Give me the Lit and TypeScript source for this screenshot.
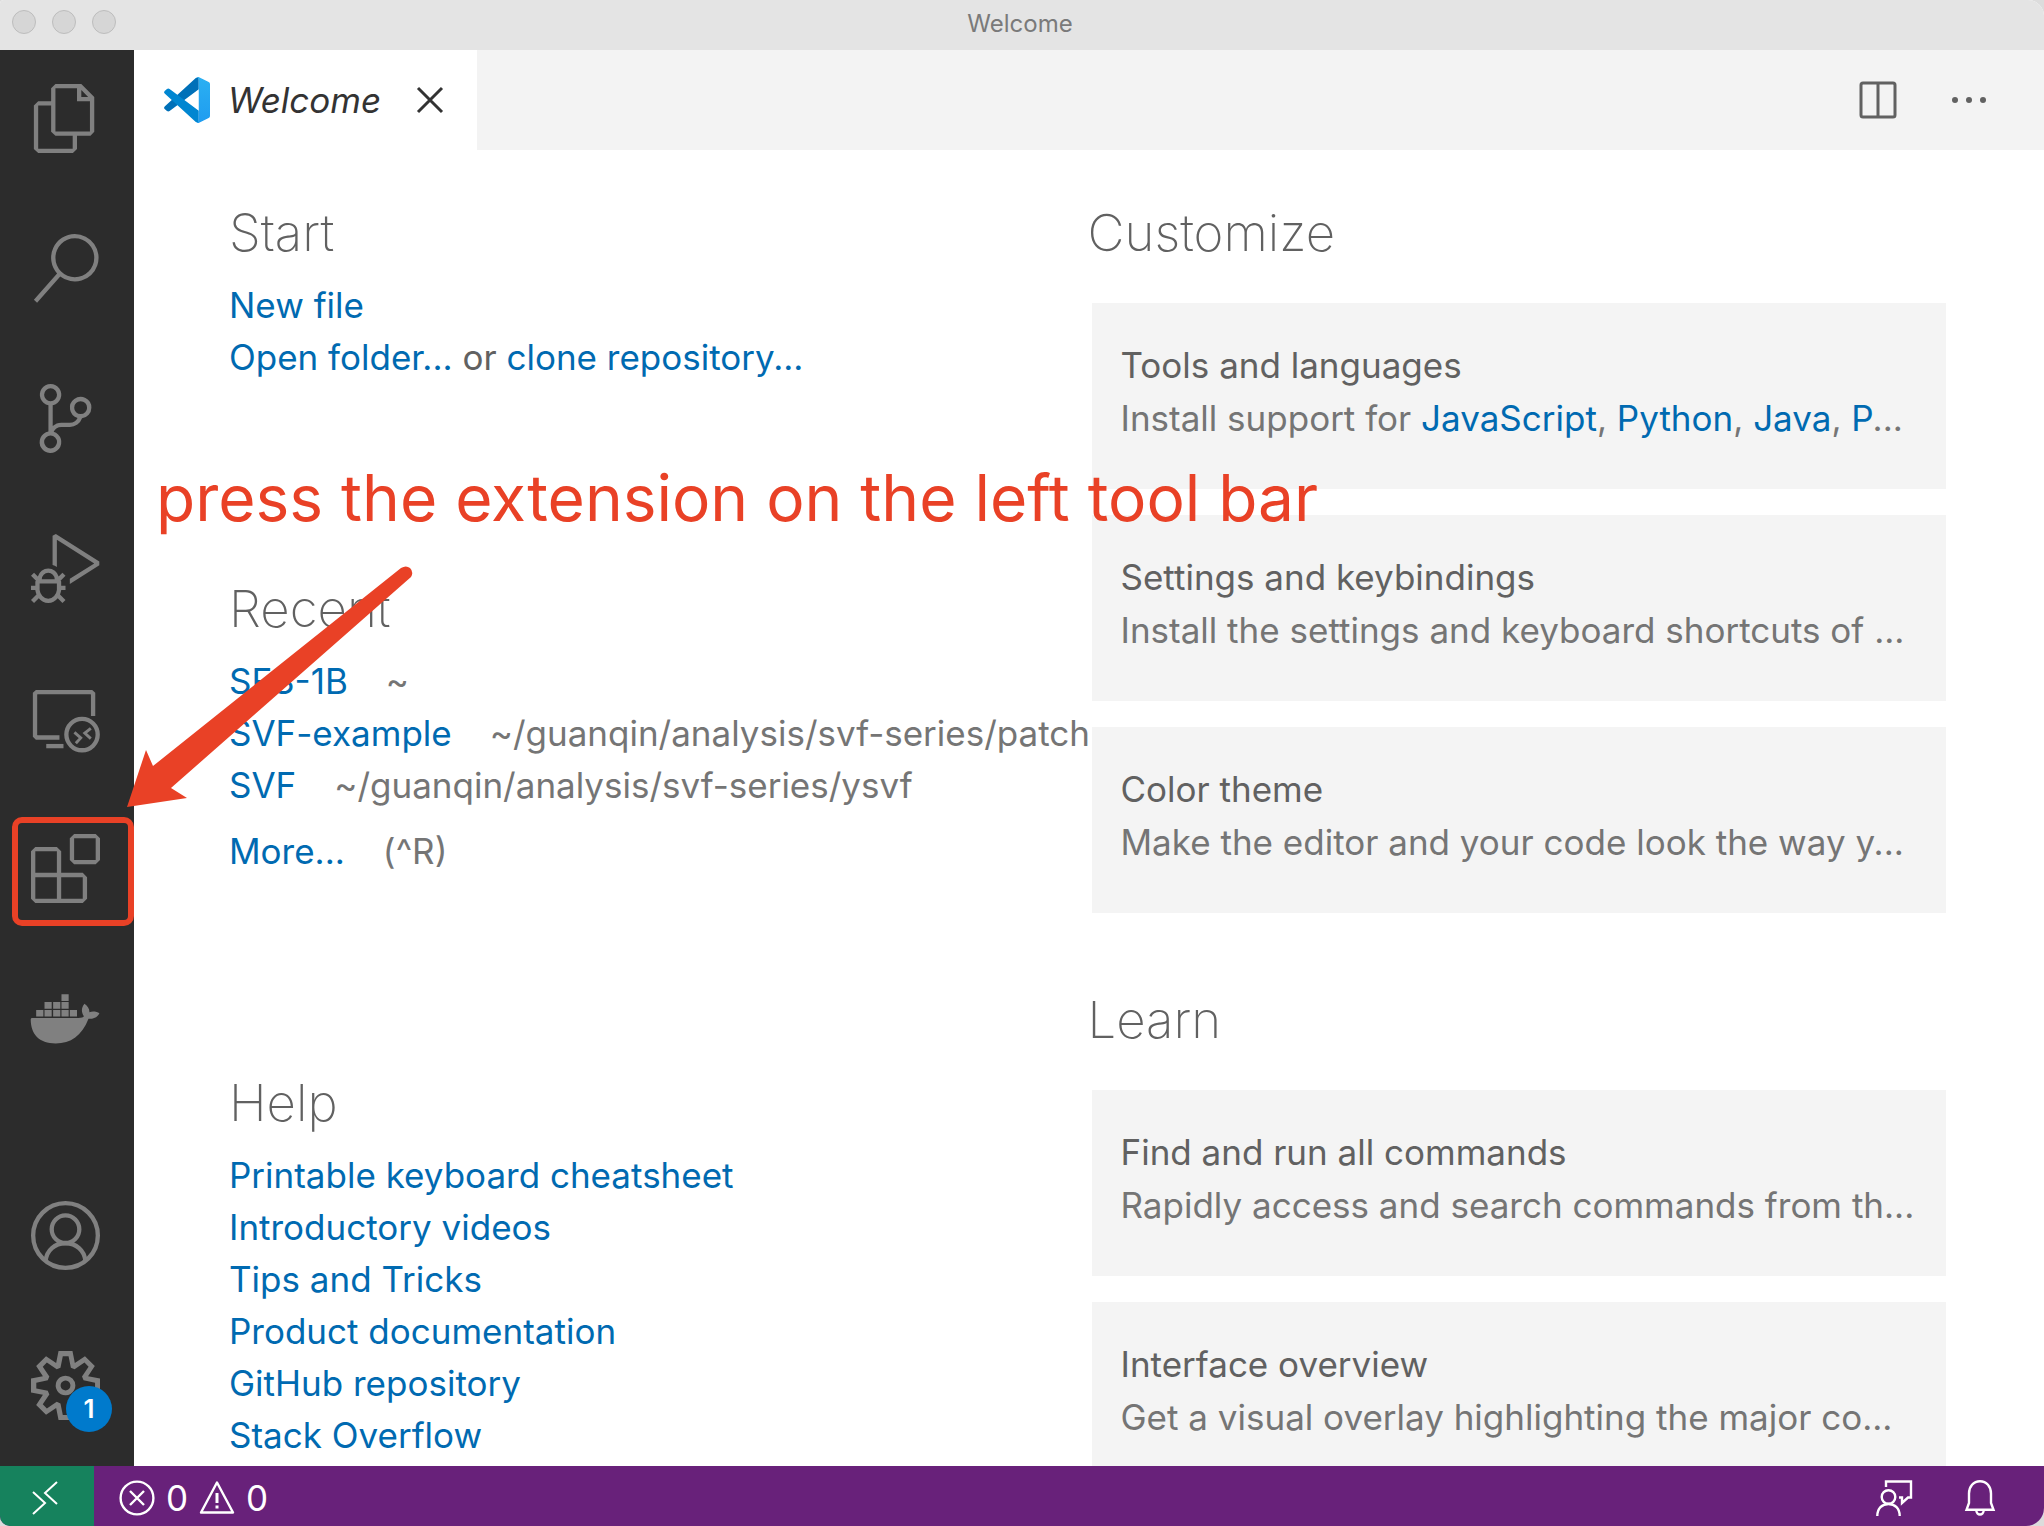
import { LitElement, html, css, svg } from "lit";
import { customElement } from "lit/decorators.js";

const filled = (d: string) => svg`<path fill="currentColor" fill-rule="evenodd" d=${d} />`;

const activityIcons = {
  explorer: filled(
    "M17.5 0h-9L7 1.5V6H2.5L1 7.5v15.07L2.5 24h12.07L16 22.57V18h4.7l1.3-1.43V4.5L17.5 0zm0 2.12l2.38 2.38H17.5V2.12zm-3 20.38h-12v-15H7v9.07L8.5 18h6v4.5zm6-6h-12v-15H16V6h4.5v10.5z"
  ),
  search: filled(
    "M15.25 0a8.25 8.25 0 0 0-6.18 13.72L1 22.88l1.12 1 8.05-9.12A8.251 8.251 0 1 0 15.25.01V0zm0 15a6.75 6.75 0 1 1 0-13.5 6.75 6.75 0 0 1 0 13.5z"
  ),
  scm: filled(
    "M21.007 8.222A3.738 3.738 0 0 0 15.045 5.2a3.737 3.737 0 0 0 1.156 6.583 2.988 2.988 0 0 1-2.668 1.67h-2.99a4.456 4.456 0 0 0-2.989 1.165V7.4a3.737 3.737 0 1 0-1.494 0v9.117a3.776 3.776 0 1 0 1.816.099 2.99 2.99 0 0 1 2.668-1.667h2.99a4.484 4.484 0 0 0 4.223-3.039 3.736 3.736 0 0 0 3.25-3.687zM4.565 3.738a2.242 2.242 0 1 1 4.484 0 2.242 2.242 0 0 1-4.484 0zm4.484 16.441a2.242 2.242 0 1 1-4.484 0 2.242 2.242 0 0 1 4.484 0zm8.221-9.715a2.242 2.242 0 1 1 0-4.485 2.242 2.242 0 0 1 0 4.485z"
  ),
  debug: filled(
    "M10.94 13.5l-1.32 1.32a3.73 3.73 0 0 0-7.24 0L1.06 13.5 0 14.56l1.72 1.72-.22.22V18H0v1.5h1.5v.08c.077.489.214.966.41 1.42L0 22.94 1.06 24l1.65-1.65A4.308 4.308 0 0 0 6 24a4.31 4.31 0 0 0 3.29-1.65L10.94 24 12 22.94 10.09 21c.198-.464.336-.951.41-1.45v-.1H12V18h-1.5v-1.5l-.22-.22L12 14.56l-1.06-1.06zM6 13.5a2.25 2.25 0 0 1 2.25 2.25h-4.5A2.25 2.25 0 0 1 6 13.5zm3 6a3.33 3.33 0 0 1-3 3 3.33 3.33 0 0 1-3-3v-2.25h6v2.25zm14.76-9.9v1.26L13.5 17.37V15.6l8.5-5.37L9 2v9.46a5.07 5.07 0 0 0-1.5-.72V.63L8.64 0l15.12 9.6z"
  ),
  remote: svg`
    <g fill="none" stroke="currentColor" stroke-width="1.5">
      <path d="M9.9 18.6H2L1.4 18V3.4L2 2.85H21L21.6 3.4V11.1" />
      <path d="M5.3 21.6H11.3" />
      <circle cx="17.75" cy="17.6" r="5.45" />
      <path stroke-width="1" d="M15.1 16.8L17.3 18.75L15.6 20.6M20.8 15.4L18.7 17.1L20.8 19" />
    </g>`,
  extensions: filled(
    "M13.5 1.5L15 0h7.5L24 1.5V9l-1.5 1.5H15L13.5 9V1.5zm1.5 0V9h7.5V1.5H15zM0 15V6l1.5-1.5H9L10.5 6v7.5H18l1.5 1.5v7.5L18 24H1.5L0 22.5V15zm9-1.5V6H1.5v7.5H9zM9 15H1.5v7.5H9V15zm1.5 7.5H18V15h-7.5v7.5z"
  ),
  docker: filled(
    "M10.6 3.6h2.5v2.3h-2.5zM4.7 6.3h2.5v2.3H4.7zM7.7 6.3h2.5v2.3H7.7zM10.6 6.3h2.5v2.3h-2.5zM1.8 9h2.5v2.3H1.8zM4.7 9h2.5v2.3H4.7zM7.7 9h2.5v2.3H7.7zM10.6 9h2.5v2.3h-2.5zM13.5 9h2.5v2.3h-2.5zM-.1 12.3Q-.1 11.8.4 11.8H16.5C17.6 11.8 18.2 11.6 18.4 11.2C17.4 9.8 17.5 8.2 18.6 6.9C19.8 7.8 20.4 8.8 20.3 9.8C21.5 9.4 22.9 9.6 23.8 10.2C23.2 11.6 21.8 12.2 20 12.1C17.7 18 13.8 20.7 8.6 20.7C2.8 20.7-.1 17.5-.1 12.3Z"
  ),
  account: svg`
    <g fill="none" stroke="currentColor" stroke-width="1.5">
      <circle cx="12" cy="12" r="11.25" />
      <circle cx="12" cy="9.8" r="4.8" />
      <path d="M5.1 20.7C5.5 17.2 8.2 14.7 12 14.7S18.5 17.2 18.9 20.7" />
    </g>`,
  gear: filled(
    "M19.85 8.75l4.15.83v4.84l-4.15.83 2.35 3.52-3.43 3.43-3.52-2.35-.83 4.15H9.58l-.83-4.15-3.52 2.35-3.43-3.43 2.35-3.52L0 14.42V9.58l4.15-.83L1.8 5.23 5.23 1.8l3.52 2.35L9.58 0h4.84l.83 4.15 3.52-2.35 3.43 3.43-2.35 3.52zm-1.57 5.07l4-.81v-2l-4-.81-.54-1.3 2.29-3.43-1.43-1.43-3.43 2.29-1.3-.54-.81-4h-2l-.81 4-1.3.54-3.43-2.29-1.43 1.43L6.38 8.9l-.54 1.3-4 .81v2l4 .81.54 1.3-2.29 3.43 1.43 1.43 3.43-2.29 1.3.54.81 4h2l.81-4 1.3-.54 3.43 2.29 1.43-1.43-2.29-3.43.54-1.3zm-8.186-4.672A3.43 3.43 0 0 1 12 8.57 3.44 3.44 0 0 1 15.43 12a3.43 3.43 0 1 1-5.336-2.852zm.956 4.274c.281.188.612.288.95.288A1.7 1.7 0 0 0 13.71 12a1.71 1.71 0 1 0-2.66 1.422z"
  ),
};

type IconName = keyof typeof activityIcons;

const topViews: { icon: IconName; label: string }[] = [
  { icon: "explorer", label: "Explorer" },
  { icon: "search", label: "Search" },
  { icon: "scm", label: "Source Control" },
  { icon: "debug", label: "Run" },
  { icon: "remote", label: "Remote Explorer" },
  { icon: "extensions", label: "Extensions" },
  { icon: "docker", label: "Docker" },
];

const recent = [
  { name: "SFS-1B", path: "~" },
  { name: "SVF-example", path: "~/guanqin/analysis/svf-series/patch" },
  { name: "SVF", path: "~/guanqin/analysis/svf-series/ysvf" },
];

const helpLinks = [
  "Printable keyboard cheatsheet",
  "Introductory videos",
  "Tips and Tricks",
  "Product documentation",
  "GitHub repository",
  "Stack Overflow",
];

const link = (text: string) => html`<a href="#">${text}</a>`;

@customElement("app-root")
export class AppRoot extends LitElement {
  static styles = css`
    :host {
      display: block;
      font-family: Inter, "Liberation Sans", sans-serif;
      font-size: 35px;
      line-height: 52px;
      color: #616161;
      background: #dcdcdc;
    }
    * {
      box-sizing: border-box;
    }
    button {
      border: 0;
      padding: 0;
      background: none;
      font: inherit;
      color: inherit;
      display: flex;
      align-items: center;
      justify-content: center;
    }
    a {
      color: #006ab1;
      text-decoration: none;
    }
    svg {
      display: block;
      flex: none;
      overflow: visible;
    }
    h1,
    h2,
    h3,
    p,
    ul {
      margin: 0;
      padding: 0;
      font-weight: 400;
      font-size: inherit;
      list-style: none;
    }
    .window {
      position: relative;
      height: 100vh;
      display: flex;
      flex-direction: column;
      overflow: hidden;
      background: #fff;
      border-radius: 4px 16px 18px 10px;
    }
    .titlebar {
      flex: none;
      height: 50px;
      display: grid;
      grid-template-columns: 1fr auto 1fr;
      align-items: center;
      padding: 0 16px 0 12px;
      background: #e4e4e4;
    }
    .titlebar h1 {
      font-size: 24px;
      line-height: 46px;
      padding-bottom: 2px;
      color: #7a7a7a;
    }
    .lights {
      display: flex;
      gap: 16px;
      padding-bottom: 6px;
    }
    .light {
      width: 24px;
      height: 24px;
      border-radius: 50%;
      background: #d6d6d6;
      border: 1px solid #bdbdbd;
    }
    .body {
      flex: 1;
      min-height: 0;
      display: flex;
    }
    .activity {
      flex: none;
      width: 134px;
      padding-right: 4px;
      display: flex;
      flex-direction: column;
      justify-content: space-between;
      background: #2c2c2c;
      color: #808080;
    }
    .group {
      display: flex;
      flex-direction: column;
      gap: 14px;
    }
    .group.bottom {
      padding-bottom: 13px;
    }
    .activity button {
      position: relative;
      width: 100%;
      height: 136px;
    }
    .activity svg {
      width: 69px;
      height: 69px;
    }
    .badge {
      position: absolute;
      left: 66px;
      top: 69px;
      width: 46px;
      height: 46px;
      border-radius: 50%;
      background: #007acc;
      color: #fff;
      font-size: 26px;
      font-weight: 600;
      line-height: 46px;
      text-align: center;
    }
    .main {
      flex: 1;
      min-width: 0;
      display: flex;
      flex-direction: column;
    }
    .tabs {
      flex: none;
      height: 100px;
      display: flex;
      justify-content: space-between;
      background: #f3f3f3;
    }
    .tab {
      display: flex;
      align-items: center;
      padding: 0 34px 0 30px;
      background: #fff;
      color: #333;
    }
    .tab .name {
      font-style: italic;
      padding: 0 36px 0 18px;
    }
    .actions {
      display: flex;
      align-items: center;
      gap: 54px;
      padding-right: 57px;
    }
    .page {
      flex: 1;
      min-height: 0;
      overflow: hidden;
      display: grid;
      grid-template-columns: 1fr 1fr;
      align-items: start;
      padding: 53px 98px 0 95px;
    }
    .column {
      min-width: 0;
      display: flex;
      flex-direction: column;
      white-space: nowrap;
    }
    .left {
      gap: 196px;
    }
    .right {
      gap: 77px;
    }
    h2 {
      font-size: 51px;
      font-weight: 200;
      line-height: 60px;
      padding-bottom: 16px;
    }
    .right h2 {
      padding-bottom: 40px;
    }
    .path {
      color: #757575;
      padding-left: 38px;
    }
    .more {
      padding-top: 14px;
    }
    .cards {
      display: flex;
      flex-direction: column;
      gap: 26px;
      padding-left: 4px;
    }
    .card {
      height: 186px;
      padding: 36px 29px;
      background: #f4f4f4;
    }
    .card p {
      color: #757575;
      padding-top: 1px;
    }
    .status {
      flex: none;
      height: 60px;
      display: flex;
      align-items: center;
      background: #68217a;
      color: #fff;
    }
    .status button {
      height: 60px;
      padding-top: 3px;
    }
    .status .remote {
      width: 94px;
      background: #16825d;
      padding-right: 4px;
    }
    .status .problems {
      gap: 11px;
      padding-left: 25px;
    }
    .tray {
      margin-left: auto;
      display: flex;
      gap: 50px;
      padding-right: 46px;
    }
    .caption {
      position: absolute;
      left: 156px;
      top: 454px;
      font-size: 64px;
      line-height: 88px;
      white-space: nowrap;
      color: #e94126;
    }
    .arrow {
      position: absolute;
      left: 127px;
      top: 565px;
      width: 286px;
      height: 242px;
      pointer-events: none;
    }
    .frame {
      position: absolute;
      left: 12px;
      top: 817px;
      width: 122px;
      height: 109px;
      border: 6px solid #e94126;
      border-radius: 10px;
      pointer-events: none;
    }
  `;

  private activityButton(icon: IconName, label: string, badge?: string) {
    return html`<button aria-label=${label}>
      <svg viewBox="0 0 24 24">${activityIcons[icon]}</svg>
      ${badge ? html`<span class="badge">${badge}</span>` : null}
    </button>`;
  }

  private card(title: string, text: unknown) {
    return html`<div class="card">
      <h3>${title}</h3>
      <p>${text}</p>
    </div>`;
  }

  render() {
    return html`
      <div class="window">
        <header class="titlebar">
          <div class="lights">
            <span class="light"></span><span class="light"></span><span class="light"></span>
          </div>
          <h1>Welcome</h1>
        </header>

        <div class="body">
          <nav class="activity">
            <div class="group">${topViews.map((v) => this.activityButton(v.icon, v.label))}</div>
            <div class="group bottom">
              ${this.activityButton("account", "Accounts")}
              ${this.activityButton("gear", "Manage", "1")}
            </div>
          </nav>

          <main class="main">
            <div class="tabs">
              <div class="tab">
                <svg width="46" height="46" viewBox="0 0 139 139">
                  <defs>
                    <linearGradient id="blade" x1="0" y1="0" x2="0" y2="1">
                      <stop offset="0" stop-color="#2bb0f2" />
                      <stop offset="1" stop-color="#1f9cf0" />
                    </linearGradient>
                  </defs>
                  <path fill="#0070b8" d="M105 0L96 3L2 89Q-2 94 2 97L9 103Q13 106 17 103L105 37Z" />
                  <path fill="#0086d1" d="M105 139L96 136L2 50Q-2 45 2 42L9 36Q13 33 17 36L105 102Z" />
                  <path
                    fill="url(#blade)"
                    d="M97 2Q101 -1 106 1L135 15Q139 17 139 21V118Q139 122 135 124L106 138Q101 140 97 137Q105 138 105 131V8Q105 1 97 2Z"
                  />
                </svg>
                <span class="name">Welcome</span>
                <button aria-label="Close">
                  <svg width="26" height="26" viewBox="0 0 26 26">
                    <path d="M1 1L25 25M25 1L1 25" stroke="#333" stroke-width="3" />
                  </svg>
                </button>
              </div>
              <div class="actions">
                <button aria-label="Split Editor">
                  <svg width="38" height="38" viewBox="0 0 38 38" fill="none" stroke="#616161" stroke-width="3">
                    <rect x="2" y="2" width="34" height="34" rx="2" />
                    <path d="M19 2V36" />
                  </svg>
                </button>
                <button aria-label="More Actions">
                  <svg width="36" height="6" viewBox="0 0 36 6" fill="#616161">
                    <circle cx="4" cy="3" r="3" />
                    <circle cx="18" cy="3" r="3" />
                    <circle cx="32" cy="3" r="3" />
                  </svg>
                </button>
              </div>
            </div>

            <div class="page">
              <div class="column left">
                <section>
                  <h2>Start</h2>
                  <ul>
                    <li>${link("New file")}</li>
                    <li>${link("Open folder...")} or ${link("clone repository...")}</li>
                  </ul>
                </section>
                <section>
                  <h2>Recent</h2>
                  <ul>
                    ${recent.map((r) => html`<li>${link(r.name)}<span class="path">${r.path}</span></li>`)}
                    <li class="more">${link("More...")}<span class="path">(^R)</span></li>
                  </ul>
                </section>
                <section>
                  <h2>Help</h2>
                  <ul>
                    ${helpLinks.map((t) => html`<li>${link(t)}</li>`)}
                  </ul>
                </section>
              </div>

              <div class="column right">
                <section>
                  <h2>Customize</h2>
                  <div class="cards">
                    ${this.card(
                      "Tools and languages",
                      html`Install support for ${link("JavaScript")}, ${link("Python")}, ${link("Java")},
                      ${link("P")}...`
                    )}
                    ${this.card("Settings and keybindings", "Install the settings and keyboard shortcuts of ...")}
                    ${this.card("Color theme", "Make the editor and your code look the way y...")}
                  </div>
                </section>
                <section>
                  <h2>Learn</h2>
                  <div class="cards">
                    ${this.card("Find and run all commands", "Rapidly access and search commands from th...")}
                    ${this.card("Interface overview", "Get a visual overlay highlighting the major co...")}
                  </div>
                </section>
              </div>
            </div>
          </main>
        </div>

        <footer class="status">
          <button class="remote" aria-label="Open a remote window">
            <svg width="26" height="34" viewBox="0 0 26 34" fill="none" stroke="#fff" stroke-width="2">
              <path d="M1 11L13 22L1 33M25 1L13 12L25 23" />
            </svg>
          </button>
          <button class="problems" aria-label="Problems">
            <svg width="36" height="36" viewBox="0 0 36 36" fill="none" stroke="#fff" stroke-width="2.4">
              <circle cx="18" cy="18" r="16.4" />
              <path d="M11 11L25 25M25 11L11 25" />
            </svg>
            <span>0</span>
            <svg width="36" height="36" viewBox="0 0 36 36" fill="none" stroke="#fff" stroke-width="2.4">
              <path d="M18 2.5L34 32.5H2Z" stroke-linejoin="round" />
              <path d="M18 13V23M18 25.5V28.5" stroke-width="3" />
            </svg>
            <span>0</span>
          </button>
          <div class="tray">
            <button aria-label="Tweet Feedback">
              <svg width="36" height="36" viewBox="0 0 36 36" fill="none" stroke="#fff" stroke-width="2.4">
                <path d="M10 7V1.5H35V17.5H32L26 23V17.5H23" />
                <circle cx="12.5" cy="17" r="6.8" />
                <path d="M1.3 36C1.3 28.5 6 24 12.5 24S23.7 28.5 23.7 36" />
              </svg>
            </button>
            <button aria-label="Notifications">
              <svg width="36" height="36" viewBox="0 0 36 36" fill="none" stroke="#fff" stroke-width="2.4">
                <path d="M4.5 29.8L7 23V13.5C7 6.5 11.5 1.3 18 1.3S29 6.5 29 13.5V23L31.5 29.8Z" />
                <path d="M14.3 30C14.3 36 21.7 36 21.7 30" />
              </svg>
            </button>
          </div>
        </footer>

        <div class="frame"></div>
        <svg class="arrow" viewBox="0 0 286 242" fill="#e94126">
          <path
            d="M0 242L19 185L26 201L274 3Q279 0 283 3Q287 7 284 12L44 223L60 233Z"
          />
        </svg>
        <p class="caption">press the extension on the left tool bar</p>
      </div>
    `;
  }
}
